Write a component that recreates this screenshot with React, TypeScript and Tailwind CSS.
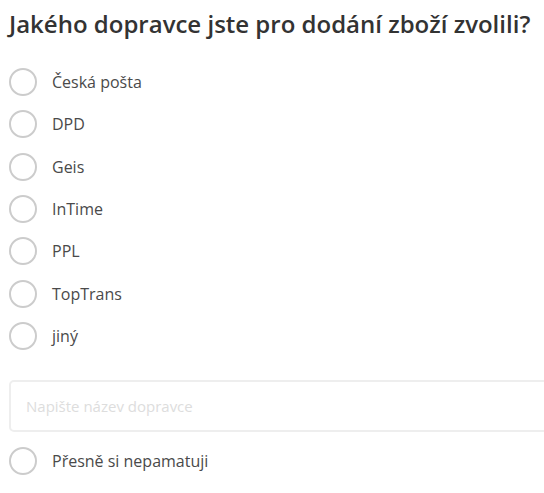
const options = ["Česká pošta", "DPD", "Geis", "InTime", "PPL", "TopTrans", "jiný"];

const Radio: React.FC<{ label: string }> = ({ label }) => (
  <label className="flex items-center h-[42.33px] gap-[15px] cursor-pointer">
    <span className="w-[28px] h-[28px] rounded-full border-2 border-[#cccccc] bg-white shrink-0" />
    <span className="text-[16px] text-[#4a4a4a]">{label}</span>
  </label>
);

export default function App() {
  return (
    <div
      className="w-[544px] h-[493px] overflow-hidden bg-white pl-[9px]"
      style={{ fontFamily: '"Open Sans", "Liberation Sans", sans-serif' }}
    >
      <h1 className="text-[24px] leading-[30px] font-semibold text-[#333333] pt-[9px] whitespace-nowrap">
        Jakého dopravce jste pro dodání zboží zvolili?
      </h1>
      <div className="mt-[22px] flex flex-col">
        {options.map((o) => (
          <Radio key={o} label={o} />
        ))}
      </div>
      <input
        type="text"
        placeholder="Napište název dopravce"
        className="mt-[23px] block w-[560px] h-[52px] border-2 border-[#eeeeee] rounded-[5px] pl-[15px] text-[15px] outline-none placeholder:text-[#dddddd]"
      />
      <div className="mt-[8px]">
        <Radio label="Přesně si nepamatuji" />
      </div>
    </div>
  );
}
